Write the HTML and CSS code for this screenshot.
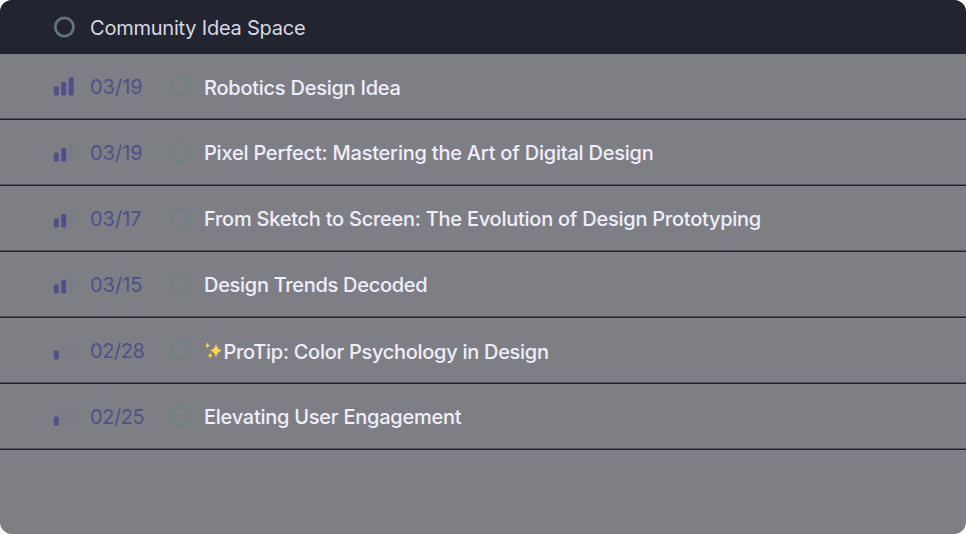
FILE: index.html
```html
<!DOCTYPE html>
<html lang="en">
<head>
<meta charset="utf-8">
<title>Community Idea Space</title>
<link rel="stylesheet" href="styles.css">
</head>
<body>
<main class="panel">
<header class="head"><svg class="ring" viewBox="0 0 22 22"><circle cx="11.400" cy="11" r="9.100"/></svg><h1>Community Idea Space</h1></header>
<ul class="list">
<li class="row"><svg class="bars" viewBox="0 0 22 22"><rect x="0.8" y="11.5" width="5" height="9" rx="1.500"/><rect x="8.200" y="7" width="5" height="13.5" rx="1.500"/><rect x="15.700" y="2.300" width="5" height="18.200" rx="1.500"/></svg><time>03/19</time><svg class="ring dim" viewBox="0 0 22 22"><circle cx="11.400" cy="11.300" r="9.100"/></svg><span class="title low">Robotics Design Idea</span></li>
<li class="row"><svg class="bars" viewBox="0 0 22 22"><rect x="0.8" y="11.5" width="5" height="9" rx="1.500"/><rect x="8.200" y="7" width="5" height="13.5" rx="1.500"/><rect class="off" x="15.700" y="2.300" width="5" height="18.200" rx="1.500"/></svg><time>03/19</time><svg class="ring dim" viewBox="0 0 22 22"><circle cx="11.400" cy="11.300" r="9.100"/></svg><span class="title loose">Pixel Perfect: Mastering the Art of Digital Design</span></li>
<li class="row"><svg class="bars" viewBox="0 0 22 22"><rect x="0.8" y="11.5" width="5" height="9" rx="1.500"/><rect x="8.200" y="7" width="5" height="13.5" rx="1.500"/><rect class="off" x="15.700" y="2.300" width="5" height="18.200" rx="1.500"/></svg><time>03/17</time><svg class="ring dim" viewBox="0 0 22 22"><circle cx="11.400" cy="11.300" r="9.100"/></svg><span class="title">From Sketch to Screen: The Evolution of Design Prototyping</span></li>
<li class="row"><svg class="bars" viewBox="0 0 22 22"><rect x="0.8" y="11.5" width="5" height="9" rx="1.500"/><rect x="8.200" y="7" width="5" height="13.5" rx="1.500"/><rect class="off" x="15.700" y="2.300" width="5" height="18.200" rx="1.500"/></svg><time>03/15</time><svg class="ring dim" viewBox="0 0 22 22"><circle cx="11.400" cy="11.300" r="9.100"/></svg><span class="title tight">Design Trends Decoded</span></li>
<li class="row"><svg class="bars" viewBox="0 0 22 22"><rect x="0.8" y="11.5" width="5" height="9" rx="1.500"/><rect class="off" x="8.200" y="7" width="5" height="13.5" rx="1.500"/><rect class="off" x="15.700" y="2.300" width="5" height="18.200" rx="1.500"/></svg><time class="wide">02/28</time><svg class="ring dim" viewBox="0 0 22 22"><circle cx="11.400" cy="11.300" r="9.100"/></svg><svg class="spark" viewBox="0 0 19 20"><path d="M12 3Q12.5 9 18 10.500Q12.5 12 12 18Q11.5 12 6 10.500Q11.500 9 12 3ZM3.500 2.500Q3.800 5.200 6.500 5.500Q3.800 5.800 3.500 9Q3.200 5.800 .5 5.500Q3.200 5.200 3.500 2.500ZM6.200 12.500Q6.500 15.200 9.200 15.500Q6.500 15.800 6.200 19Q5.900 15.800 3.200 15.500Q5.900 15.200 6.200 12.500Z"/></svg><span class="title low tip">ProTip: Color Psychology in Design</span></li>
<li class="row"><svg class="bars" viewBox="0 0 22 22"><rect x="0.8" y="11.5" width="5" height="9" rx="1.500"/><rect class="off" x="8.200" y="7" width="5" height="13.5" rx="1.500"/><rect class="off" x="15.700" y="2.300" width="5" height="18.200" rx="1.500"/></svg><time class="wide">02/25</time><svg class="ring dim" viewBox="0 0 22 22"><circle cx="11.400" cy="11.300" r="9.100"/></svg><span class="title">Elevating User Engagement</span></li>
</ul>
</main>
</body>
</html>
```
FILE: styles.css
```css
* { box-sizing: border-box; margin: 0; padding: 0; }
body { background: #fff; font: 400 20px/24px Inter, sans-serif; }
.panel { height: 534px; overflow: hidden; border-radius: 12px; background: #7e7f84; }
.head { display: flex; align-items: center; height: 54px; padding-left: 53px; background: #22242f; color: #d6d8e4; }
h1 { font: inherit; letter-spacing: -.22px; margin-left: 15px; padding-top: 2px; }
.ring { width: 22px; height: 22px; flex: none; fill: none; stroke: #64757a; stroke-width: 2.8; }
.dim { stroke: #70817f; }
.list { list-style: none; }
.row { display: flex; align-items: center; height: 66px; padding: 0 0 1px 53px; border-bottom: 1px solid #22242f; box-shadow: inset 0 -1px #4c4d57; color: #f0eefc; white-space: nowrap; }
.bars { width: 22px; height: 22px; flex: none; fill: #4f508a; }
.bars .off { fill: #7a7b86; }
time { width: 79px; margin-left: 15px; padding-top: 2px; flex: none; color: #4f508a; }
time.wide { letter-spacing: -.4px; }
.title { padding-top: 2px; font-weight: 450; letter-spacing: -.25px; }
.title.loose { letter-spacing: -.22px; }
.title.tight { letter-spacing: -.3px; }
.title.tip { letter-spacing: -.29px; margin-left: .5px; }
.title.low { padding-top: 4px; }
.dim + .title, .spark { margin-left: 13px; }
.spark { width: 19px; height: 20px; fill: #ffd34d; }
```
